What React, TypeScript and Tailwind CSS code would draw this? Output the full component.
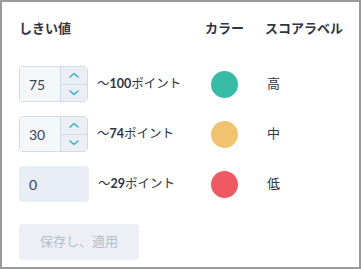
import { ReactNode } from "react";

const rows = [
  { value: "75", max: "100", color: "bg-[#37bca7]", label: "高", spinner: true },
  { value: "30", max: "74", color: "bg-[#f2c36f]", label: "中", spinner: true },
  { value: "0", max: "29", color: "bg-[#ee5962]", label: "低", spinner: false },
];

export default function App() {
  return (
    <div
      className="w-[361px] h-[269px] border-2 border-[#9a9a9a] bg-white pl-[17px] pt-[16px] text-[#2f3545]"
      style={{ fontFamily: 'Lato, "Noto Sans CJK JP", sans-serif' }}
    >
      <Grid>
        <HeaderCell>しきい値</HeaderCell>
        <HeaderCell>カラー</HeaderCell>
        <HeaderCell>スコアラベル</HeaderCell>
      </Grid>
      <div className="mt-[28px] flex flex-col gap-[14px]">
        {rows.map((row) => (
          <Grid key={row.label}>
            <div className="flex items-center gap-[9px]">
              <NumberInput value={row.value} spinner={row.spinner} />
              <span className="text-[12.5px]">
                〜<b className="font-bold">{row.max}</b>ポイント
              </span>
            </div>
            <div className="flex items-center pl-[6px]">
              <div className={`size-[27px] rounded-full ${row.color}`} />
            </div>
            <div className="flex items-center pl-[2px] text-[13px]">
              {row.label}
            </div>
          </Grid>
        ))}
      </div>
      <button className="mt-[22px] h-[36px] w-[120px] rounded-[4px] bg-[#eceff5] text-[13px] text-[#b5bdca]">
        保存し、適用
      </button>
    </div>
  );
}

function Grid({ children }: { children: ReactNode }) {
  return (
    <div className="grid grid-cols-[186px_60px_1fr] items-center">
      {children}
    </div>
  );
}

function HeaderCell({ children }: { children: ReactNode }) {
  return (
    <div className="text-[13px] font-semibold leading-[20px]">{children}</div>
  );
}

function NumberInput({ value, spinner }: { value: string; spinner: boolean }) {
  if (!spinner) {
    return (
      <div className="flex h-[36px] w-[70px] items-center rounded-[4px] bg-[#e9edf5] pl-[10px] text-[14px] text-[#3a4256]">
        {value}
      </div>
    );
  }
  return (
    <div className="flex h-[36px] w-[69px] overflow-hidden rounded-[4px] border border-[#d3dbe6]">
      <div className="flex flex-1 items-center bg-[#f5f8fb] pl-[9px] text-[14px] text-[#3a4256]">
        {value}
      </div>
      <div className="flex w-[27px] flex-col border-l border-[#d3dbe6] bg-[#ebeff5]">
        <div className="flex flex-1 items-center justify-center border-b border-[#d3dbe6]">
          <Chevron up />
        </div>
        <div className="flex flex-1 items-center justify-center">
          <Chevron />
        </div>
      </div>
    </div>
  );
}

function Chevron({ up }: { up?: boolean }) {
  return (
    <svg width="10" height="6" viewBox="0 0 10 6" fill="none">
      <path
        d={up ? "M1 5 L5 1.5 L9 5" : "M1 1 L5 4.5 L9 1"}
        stroke="#3aaed0"
        strokeWidth="1.6"
        strokeLinecap="round"
        strokeLinejoin="round"
      />
    </svg>
  );
}
